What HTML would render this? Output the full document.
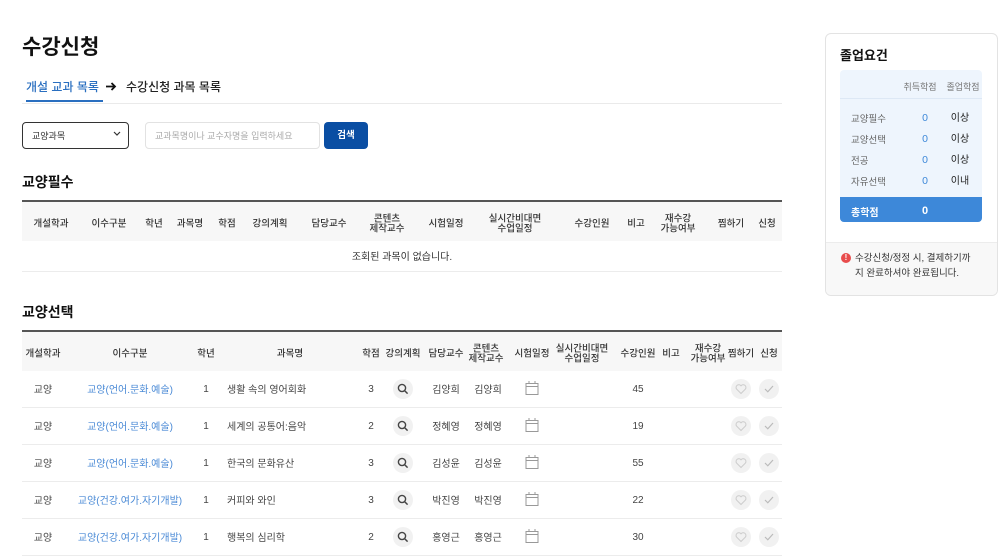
<!DOCTYPE html>
<html><head><meta charset="utf-8"><style>
*{margin:0;padding:0;box-sizing:border-box}
body{width:1000px;height:558px;background:#fff;position:relative;overflow:hidden;font-family:"Liberation Sans","Noto Sans CJK KR",sans-serif;color:#222}
.a{position:absolute;white-space:nowrap}
.c{position:absolute;transform:translate(-50%,-50%);white-space:nowrap;text-align:center;line-height:12px;margin-top:2px}
.n{margin-top:0}
.h{font-size:9.5px;color:#333;line-height:9.5px;font-weight:500}
.d{font-size:10px;color:#444}
.b{color:#4a8ad6}
.ln{position:absolute;left:22px;width:760px;height:1px;background:#ececec}
.ic{position:absolute;width:20px;height:20px;border-radius:50%;background:#f1f1f1;transform:translate(-50%,-50%)}
svg.c{margin-top:0}
</style></head><body>
<div class="a" style="left:22px;top:31px;font-size:21px;font-weight:700;color:#111">수강신청</div>
<div class="a" style="left:26px;top:78px;font-size:12px;color:#2a6fc0;font-weight:500">개설 교과 목록</div>
<svg class="a" style="left:106px;top:82px" width="11" height="9"><path d="M0 4.5h9M5.5 1l3.5 3.5-3.5 3.5" stroke="#111" stroke-width="1.8" fill="none"/></svg>
<div class="a" style="left:126px;top:78px;font-size:12px;font-weight:500;color:#222">수강신청 과목 목록</div>
<div class="a" style="left:26px;top:100px;width:77px;height:2px;background:#2a6fc0"></div>
<div class="a" style="left:22px;top:103px;width:760px;height:1px;background:#eaeaea"></div>
<div class="a" style="left:22px;top:122px;width:107px;height:27px;border:1.5px solid #333;border-radius:4px"></div>
<div class="a" style="left:32px;top:129px;font-size:9px;color:#333">교양과목</div>
<svg class="a" style="left:113px;top:131px" width="8" height="6"><path d="M1 1l3 3 3-3" stroke="#333" fill="none" stroke-width="1.2"/></svg>
<div class="a" style="left:145px;top:122px;width:175px;height:27px;border:1px solid #e2e2e2;border-radius:4px"></div>
<div class="a" style="left:155px;top:129px;font-size:9px;color:#aaa">교과목명이나 교수자명을 입력하세요</div>
<div class="a" style="left:324px;top:122px;width:44px;height:27px;background:#0a4ea3;border-radius:4px;color:#fff;font-size:9.5px;font-weight:700;text-align:center;line-height:27px">검색</div>

<div class="a" style="left:22px;top:172px;font-size:14px;font-weight:700;color:#111">교양필수</div>
<div class="a" style="left:22px;top:200px;width:760px;height:2px;background:#555"></div>
<div class="a" style="left:22px;top:202px;width:760px;height:39px;background:#f7f7f7"></div>
<div class="c h" style="left:51px;top:222px">개설학과</div>
<div class="c h" style="left:109px;top:222px">이수구분</div>
<div class="c h" style="left:154px;top:222px">학년</div>
<div class="c h" style="left:190px;top:222px">과목명</div>
<div class="c h" style="left:227px;top:222px">학점</div>
<div class="c h" style="left:270px;top:222px">강의계획</div>
<div class="c h" style="left:329px;top:222px">담당교수</div>
<div class="c h" style="left:387px;top:222px">콘텐츠<br>제작교수</div>
<div class="c h" style="left:446px;top:222px">시험일정</div>
<div class="c h" style="left:515px;top:222px">실시간비대면<br>수업일정</div>
<div class="c h" style="left:592px;top:222px">수강인원</div>
<div class="c h" style="left:636px;top:222px">비고</div>
<div class="c h" style="left:678px;top:222px">재수강<br>가능여부</div>
<div class="c h" style="left:731px;top:222px">찜하기</div>
<div class="c h" style="left:767px;top:222px">신청</div>
<div class="c d" style="left:402px;top:256px;color:#333">조회된 과목이 없습니다.</div>
<div class="ln" style="top:271px"></div>

<div class="a" style="left:22px;top:302px;font-size:14px;font-weight:700;color:#111">교양선택</div>
<div class="a" style="left:22px;top:330px;width:760px;height:2px;background:#555"></div>
<div class="a" style="left:22px;top:332px;width:760px;height:39px;background:#f7f7f7"></div>
<div class="c h" style="left:43px;top:352px">개설학과</div>
<div class="c h" style="left:130px;top:352px">이수구분</div>
<div class="c h" style="left:206px;top:352px">학년</div>
<div class="c h" style="left:290px;top:352px">과목명</div>
<div class="c h" style="left:371px;top:352px">학점</div>
<div class="c h" style="left:403px;top:352px">강의계획</div>
<div class="c h" style="left:446px;top:352px">담당교수</div>
<div class="c h" style="left:486px;top:352px">콘텐츠<br>제작교수</div>
<div class="c h" style="left:532px;top:352px">시험일정</div>
<div class="c h" style="left:582px;top:352px">실시간비대면<br>수업일정</div>
<div class="c h" style="left:638px;top:352px">수강인원</div>
<div class="c h" style="left:671px;top:352px">비고</div>
<div class="c h" style="left:708px;top:352px">재수강<br>가능여부</div>
<div class="c h" style="left:741px;top:352px">찜하기</div>
<div class="c h" style="left:769px;top:352px">신청</div>

<div class="ln" style="top:407px"></div><div class="ln" style="top:444px"></div><div class="ln" style="top:481px"></div><div class="ln" style="top:518px"></div><div class="ln" style="top:555px"></div>

<!-- row 1 -->
<div class="c d" style="left:43px;top:389px">교양</div><div class="c d b" style="left:130px;top:389px">교양(언어.문화.예술)</div><div class="c d n" style="left:206px;top:390px">1</div><div class="c d" style="left:227px;top:389px;transform:translate(0,-50%)">생활 속의 영어회화</div><div class="c d n" style="left:371px;top:390px">3</div><div class="ic" style="left:403px;top:389px"></div><svg class="c" style="left:403px;top:389px" width="12" height="12"><circle cx="5" cy="5" r="3.6" stroke="#444" stroke-width="1.4" fill="none"/><path d="M7.6 7.6l3 3" stroke="#444" stroke-width="1.5"/></svg><div class="c d" style="left:446px;top:389px">김양희</div><div class="c d" style="left:488px;top:389px">김양희</div><svg class="c" style="left:532px;top:388px" width="15" height="16"><path d="M1.5 3.5h12v11h-12zM1.5 6.5h12M4.5 1v3M10.5 1v3" stroke="#999" fill="none"/></svg><div class="c d n" style="left:638px;top:390px">45</div><div class="ic" style="left:741px;top:389px"></div><svg class="c" style="left:741px;top:389px" width="12" height="11"><path d="M6 10L1.6 5.6A2.6 2.6 0 0 1 6 2.3a2.6 2.6 0 0 1 4.4 3.3z" stroke="#ccc" fill="none"/></svg><div class="ic" style="left:769px;top:389px"></div><svg class="c" style="left:769px;top:389px" width="10" height="8"><path d="M1 4l2.8 2.8L9 1" stroke="#bbb" stroke-width="1.2" fill="none"/></svg>
<!-- row 2 -->
<div class="c d" style="left:43px;top:426px">교양</div><div class="c d b" style="left:130px;top:426px">교양(언어.문화.예술)</div><div class="c d n" style="left:206px;top:427px">1</div><div class="c d" style="left:227px;top:426px;transform:translate(0,-50%)">세계의 공통어:음악</div><div class="c d n" style="left:371px;top:427px">2</div><div class="ic" style="left:403px;top:426px"></div><svg class="c" style="left:403px;top:426px" width="12" height="12"><circle cx="5" cy="5" r="3.6" stroke="#444" stroke-width="1.4" fill="none"/><path d="M7.6 7.6l3 3" stroke="#444" stroke-width="1.5"/></svg><div class="c d" style="left:446px;top:426px">정혜영</div><div class="c d" style="left:488px;top:426px">정혜영</div><svg class="c" style="left:532px;top:425px" width="15" height="16"><path d="M1.5 3.5h12v11h-12zM1.5 6.5h12M4.5 1v3M10.5 1v3" stroke="#999" fill="none"/></svg><div class="c d n" style="left:638px;top:427px">19</div><div class="ic" style="left:741px;top:426px"></div><svg class="c" style="left:741px;top:426px" width="12" height="11"><path d="M6 10L1.6 5.6A2.6 2.6 0 0 1 6 2.3a2.6 2.6 0 0 1 4.4 3.3z" stroke="#ccc" fill="none"/></svg><div class="ic" style="left:769px;top:426px"></div><svg class="c" style="left:769px;top:426px" width="10" height="8"><path d="M1 4l2.8 2.8L9 1" stroke="#bbb" stroke-width="1.2" fill="none"/></svg>
<!-- row 3 -->
<div class="c d" style="left:43px;top:463px">교양</div><div class="c d b" style="left:130px;top:463px">교양(언어.문화.예술)</div><div class="c d n" style="left:206px;top:464px">1</div><div class="c d" style="left:227px;top:463px;transform:translate(0,-50%)">한국의 문화유산</div><div class="c d n" style="left:371px;top:464px">3</div><div class="ic" style="left:403px;top:463px"></div><svg class="c" style="left:403px;top:463px" width="12" height="12"><circle cx="5" cy="5" r="3.6" stroke="#444" stroke-width="1.4" fill="none"/><path d="M7.6 7.6l3 3" stroke="#444" stroke-width="1.5"/></svg><div class="c d" style="left:446px;top:463px">김성윤</div><div class="c d" style="left:488px;top:463px">김성윤</div><svg class="c" style="left:532px;top:462px" width="15" height="16"><path d="M1.5 3.5h12v11h-12zM1.5 6.5h12M4.5 1v3M10.5 1v3" stroke="#999" fill="none"/></svg><div class="c d n" style="left:638px;top:464px">55</div><div class="ic" style="left:741px;top:463px"></div><svg class="c" style="left:741px;top:463px" width="12" height="11"><path d="M6 10L1.6 5.6A2.6 2.6 0 0 1 6 2.3a2.6 2.6 0 0 1 4.4 3.3z" stroke="#ccc" fill="none"/></svg><div class="ic" style="left:769px;top:463px"></div><svg class="c" style="left:769px;top:463px" width="10" height="8"><path d="M1 4l2.8 2.8L9 1" stroke="#bbb" stroke-width="1.2" fill="none"/></svg>
<!-- row 4 -->
<div class="c d" style="left:43px;top:500px">교양</div><div class="c d b" style="left:130px;top:500px">교양(건강.여가.자기개발)</div><div class="c d n" style="left:206px;top:501px">1</div><div class="c d" style="left:227px;top:500px;transform:translate(0,-50%)">커피와 와인</div><div class="c d n" style="left:371px;top:501px">3</div><div class="ic" style="left:403px;top:500px"></div><svg class="c" style="left:403px;top:500px" width="12" height="12"><circle cx="5" cy="5" r="3.6" stroke="#444" stroke-width="1.4" fill="none"/><path d="M7.6 7.6l3 3" stroke="#444" stroke-width="1.5"/></svg><div class="c d" style="left:446px;top:500px">박진영</div><div class="c d" style="left:488px;top:500px">박진영</div><svg class="c" style="left:532px;top:499px" width="15" height="16"><path d="M1.5 3.5h12v11h-12zM1.5 6.5h12M4.5 1v3M10.5 1v3" stroke="#999" fill="none"/></svg><div class="c d n" style="left:638px;top:501px">22</div><div class="ic" style="left:741px;top:500px"></div><svg class="c" style="left:741px;top:500px" width="12" height="11"><path d="M6 10L1.6 5.6A2.6 2.6 0 0 1 6 2.3a2.6 2.6 0 0 1 4.4 3.3z" stroke="#ccc" fill="none"/></svg><div class="ic" style="left:769px;top:500px"></div><svg class="c" style="left:769px;top:500px" width="10" height="8"><path d="M1 4l2.8 2.8L9 1" stroke="#bbb" stroke-width="1.2" fill="none"/></svg>
<!-- row 5 -->
<div class="c d" style="left:43px;top:537px">교양</div><div class="c d b" style="left:130px;top:537px">교양(건강.여가.자기개발)</div><div class="c d n" style="left:206px;top:538px">1</div><div class="c d" style="left:227px;top:537px;transform:translate(0,-50%)">행복의 심리학</div><div class="c d n" style="left:371px;top:538px">2</div><div class="ic" style="left:403px;top:537px"></div><svg class="c" style="left:403px;top:537px" width="12" height="12"><circle cx="5" cy="5" r="3.6" stroke="#444" stroke-width="1.4" fill="none"/><path d="M7.6 7.6l3 3" stroke="#444" stroke-width="1.5"/></svg><div class="c d" style="left:446px;top:537px">홍영근</div><div class="c d" style="left:488px;top:537px">홍영근</div><svg class="c" style="left:532px;top:536px" width="15" height="16"><path d="M1.5 3.5h12v11h-12zM1.5 6.5h12M4.5 1v3M10.5 1v3" stroke="#999" fill="none"/></svg><div class="c d n" style="left:638px;top:538px">30</div><div class="ic" style="left:741px;top:537px"></div><svg class="c" style="left:741px;top:537px" width="12" height="11"><path d="M6 10L1.6 5.6A2.6 2.6 0 0 1 6 2.3a2.6 2.6 0 0 1 4.4 3.3z" stroke="#ccc" fill="none"/></svg><div class="ic" style="left:769px;top:537px"></div><svg class="c" style="left:769px;top:537px" width="10" height="8"><path d="M1 4l2.8 2.8L9 1" stroke="#bbb" stroke-width="1.2" fill="none"/></svg>

<!-- side panel -->
<div class="a" style="left:825px;top:33px;width:173px;height:263px;border:1px solid #e3e3e3;border-radius:6px;overflow:hidden">
 <div class="a" style="left:0;top:208px;width:173px;height:55px;background:#f8f8f8;border-top:1px solid #ececec"></div>
</div>
<div class="a" style="left:840px;top:45px;font-size:13px;font-weight:700;color:#111">졸업요건</div>
<div class="a" style="left:840px;top:70px;width:142px;height:152px;background:#eef5fd;border-radius:4px;overflow:hidden">
 <div class="a" style="left:0;top:28px;width:142px;height:1px;background:#dde8f5"></div>
 <div class="a" style="left:0;top:127px;width:142px;height:25px;background:#3d88d9"></div>
</div>
<div class="c" style="left:920px;top:85px;font-size:9px;color:#777">취득학점</div>
<div class="c" style="left:963px;top:85px;font-size:9px;color:#777">졸업학점</div>
<div class="a" style="left:851px;top:111px;font-size:9.5px;color:#666">교양필수</div><div class="c n" style="left:925px;top:118px;font-size:10.5px;color:#3d88d9">0</div><div class="c" style="left:960px;top:117px;font-size:10px;color:#222">이상</div>
<div class="a" style="left:851px;top:132px;font-size:9.5px;color:#666">교양선택</div><div class="c n" style="left:925px;top:139px;font-size:10.5px;color:#3d88d9">0</div><div class="c" style="left:960px;top:138px;font-size:10px;color:#222">이상</div>
<div class="a" style="left:851px;top:153px;font-size:9.5px;color:#666">전공</div><div class="c n" style="left:925px;top:160px;font-size:10.5px;color:#3d88d9">0</div><div class="c" style="left:960px;top:159px;font-size:10px;color:#222">이상</div>
<div class="a" style="left:851px;top:174px;font-size:9.5px;color:#666">자유선택</div><div class="c n" style="left:925px;top:181px;font-size:10.5px;color:#3d88d9">0</div><div class="c" style="left:960px;top:180px;font-size:10px;color:#222">이내</div>
<div class="a" style="left:851px;top:204px;font-size:10px;color:#fff;font-weight:700">총학점</div><div class="c n" style="left:925px;top:211px;font-size:11px;color:#fff;font-weight:700">0</div>
<div class="a" style="left:841px;top:253px;width:10px;height:10px;border-radius:50%;background:#e84c4c;color:#fff;font-size:8px;font-weight:700;text-align:center;line-height:10px">!</div>
<div class="a" style="left:855px;top:251px;font-size:9.5px;color:#333;line-height:15px">수강신청/정정 시, 결제하기까<br>지 완료하셔야 완료됩니다.</div>
</body></html>
